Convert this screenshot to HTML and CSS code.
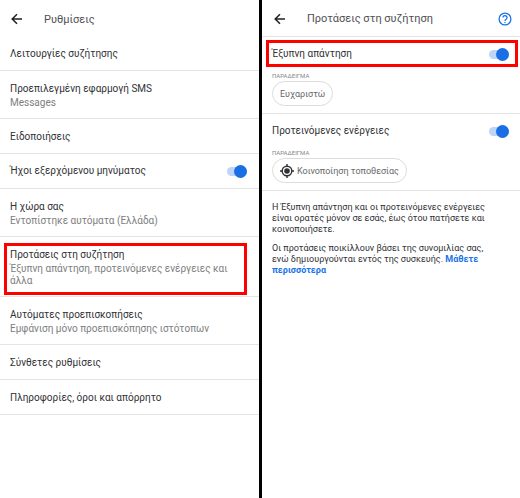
FILE: index.html
```html
<!DOCTYPE html>
<html lang="el">
<head>
<meta charset="utf-8">
<title>Ρυθμίσεις</title>
<link rel="stylesheet" href="styles.css">
</head>
<body>
<main class="screens">
  <section class="screen">
    <header class="bar">
      <button class="icon-button" type="button" aria-label="Πίσω">
        <svg class="icon-back" viewBox="0 0 12 12"><path d="M11 6H1.5M6 1.2L1.2 6L6 10.8"/></svg>
      </button>
      <h1 class="bar-title">Ρυθμίσεις</h1>
    </header>
    <ul class="list">
      <li class="row"><a class="row-title" href="#">Λειτουργίες συζήτησης</a></li>
      <li class="row row-two"><a class="row-title" href="#">Προεπιλεγμένη εφαρμογή SMS</a><p class="row-note">Messages</p></li>
      <li class="row"><a class="row-title" href="#">Ειδοποιήσεις</a></li>
      <li class="row row-switch">
        <label class="row-title" for="sounds">Ήχοι εξερχόμενου μηνύματος</label>
        <input class="switch" id="sounds" type="checkbox" role="switch" checked>
      </li>
      <li class="row row-two"><a class="row-title" href="#">Η χώρα σας</a><p class="row-note">Εντοπίστηκε αυτόματα (Ελλάδα)</p></li>
      <li class="row row-three marked"><a class="row-title" href="#">Προτάσεις στη συζήτηση</a><p class="row-note">Έξυπνη απάντηση, προτεινόμενες ενέργειες και άλλα</p></li>
      <li class="row row-two"><a class="row-title" href="#">Αυτόματες προεπισκοπήσεις</a><p class="row-note">Εμφάνιση μόνο προεπισκόπησης ιστότοπων</p></li>
      <li class="row"><a class="row-title" href="#">Σύνθετες ρυθμίσεις</a></li>
      <li class="row"><a class="row-title" href="#">Πληροφορίες, όροι και απόρρητο</a></li>
    </ul>
  </section>

  <section class="screen screen-detail">
    <header class="bar bar-detail">
      <button class="icon-button" type="button" aria-label="Πίσω">
        <svg class="icon-back" viewBox="0 0 12 12"><path d="M11 6H1.5M6 1.2L1.2 6L6 10.8"/></svg>
      </button>
      <h2 class="bar-title">Προτάσεις στη συζήτηση</h2>
      <button class="icon-button" type="button" aria-label="Βοήθεια">
        <svg class="icon-help" viewBox="0 0 14 14"><circle cx="7" cy="7" r="5.9"/><path d="M5 5.6a2 2 0 1 1 3.2 1.6C7.400 7.700 7 8 7 8.900"/><path d="M7 9.900v1.200"/></svg>
      </button>
    </header>
    <div class="option">
      <div class="option-head marked">
        <label class="row-title" for="reply">Έξυπνη απάντηση</label>
        <input class="switch" id="reply" type="checkbox" role="switch" checked>
      </div>
      <p class="caption">ΠΑΡΑΔΕΙΓΜΑ</p>
      <button class="chip" type="button">Ευχαριστώ</button>
    </div>
    <div class="option">
      <div class="option-head">
        <label class="row-title" for="actions">Προτεινόμενες ενέργειες</label>
        <input class="switch" id="actions" type="checkbox" role="switch" checked>
      </div>
      <p class="caption">ΠΑΡΑΔΕΙΓΜΑ</p>
      <button class="chip" type="button">
        <svg class="icon-location" viewBox="0 0 14 14"><circle class="ring" cx="7" cy="7" r="4.800"/><circle class="dot" cx="7" cy="7" r="2.800"/><path class="ring" d="M7 0v2M7 12v2M0 7h2M12 7h2"/></svg>
        Κοινοποίηση τοποθεσίας
      </button>
    </div>
    <div class="info">
      <p>Η Έξυπνη απάντηση και οι προτεινόμενες ενέργειες είναι ορατές μόνον σε εσάς, έως ότου πατήσετε και κοινοποιήσετε.</p>
      <p>Οι προτάσεις ποικίλλουν βάσει της συνομιλίας σας, ενώ δημιουργούνται εντός της συσκευής. <a class="more" href="#">Μάθετε περισσότερα</a></p>
    </div>
  </section>
</main>
</body>
</html>
```
FILE: styles.css
```css
* {
  box-sizing: border-box;
  margin: 0;
  padding: 0;
}

body {
  background: #fff;
  color: #303134;
  font-family: Roboto, "Liberation Sans", sans-serif;
  font-size: 10px;
}

button {
  border: 0;
  background: none;
  font: inherit;
}

a {
  color: inherit;
  text-decoration: none;
}

.screens {
  display: grid;
  grid-template-columns: 259fr 261fr;
  min-height: 100vh;
}

.screen-detail {
  border-left: 3px solid #000;
}

.bar {
  display: flex;
  align-items: center;
  height: 36px;
  padding: 2px 7px 0 11px;
}

.bar-detail {
  height: 37px;
  padding: 1px 8px 0 12px;
  border-bottom: 1px solid #e4e4e4;
}

.bar-title {
  flex: 1;
  margin-left: 21px;
  color: #505154;
  font-size: 11px;
  font-weight: 400;
}

.icon-button {
  display: flex;
}

.icon-back {
  width: 12px;
  height: 12px;
  fill: none;
  stroke: #202124;
  stroke-width: 1.5;
}

.icon-help {
  width: 14px;
  height: 14px;
  fill: none;
  stroke: #1a73e8;
  stroke-width: 1.3;
}

.list {
  list-style: none;
}

.row {
  display: flex;
  flex-direction: column;
  justify-content: center;
  min-height: 35px;
  padding: 2px 10px 0;
  border-bottom: 1px solid #e4e4e4;
}

.row-two {
  min-height: 48px;
  padding-top: 0;
}

.row-three {
  min-height: 60px;
  padding: 0 16px 0 10px;
}

.row-switch {
  flex-direction: row;
  align-items: center;
  justify-content: space-between;
  padding: 0 12px 0 10px;
}

.row-title {
  line-height: 16px;
}

.row-note {
  color: #7d7e80;
  line-height: 12px;
}

.marked {
  position: relative;
}

.marked::after {
  position: absolute;
  inset: 6px 12px 1px 4px;
  border: 3px solid #f00;
  content: "";
  pointer-events: none;
}

.switch {
  display: flex;
  align-items: center;
  justify-content: flex-end;
  width: 20px;
  height: 9px;
  border-radius: 5px;
  background: #bdd5f8;
  appearance: none;
}

.switch::before {
  width: 13px;
  height: 13px;
  flex: none;
  border-radius: 50%;
  background: #1a6fe4;
  content: "";
}

.option {
  height: 77px;
  border-bottom: 1px solid #e4e4e4;
}

.option-head {
  display: flex;
  align-items: center;
  justify-content: space-between;
  height: 34px;
  padding: 0 11px 0 10px;
}

.option-head.marked::after {
  inset: 3px 2px 4px 4px;
}

.caption {
  padding-left: 10px;
  color: #85868a;
  font-size: 6px;
  line-height: 10px;
}

.chip {
  display: flex;
  align-items: center;
  gap: 3px;
  height: 25px;
  margin-left: 10px;
  padding: 0 7px;
  border: 1px solid #dcdcdc;
  border-radius: 13px;
  color: #66676a;
  font-size: 9px;
}

.icon-location {
  width: 14px;
  height: 14px;
}

.icon-location .ring {
  fill: none;
  stroke: #303134;
  stroke-width: 1.4;
}

.icon-location .dot {
  fill: #303134;
}

.info {
  display: grid;
  gap: 8px;
  padding: 11px 32px 0 10px;
  font-size: 9px;
  line-height: 11px;
}

.more {
  color: #1a73e8;
  font-weight: 700;
}
```
